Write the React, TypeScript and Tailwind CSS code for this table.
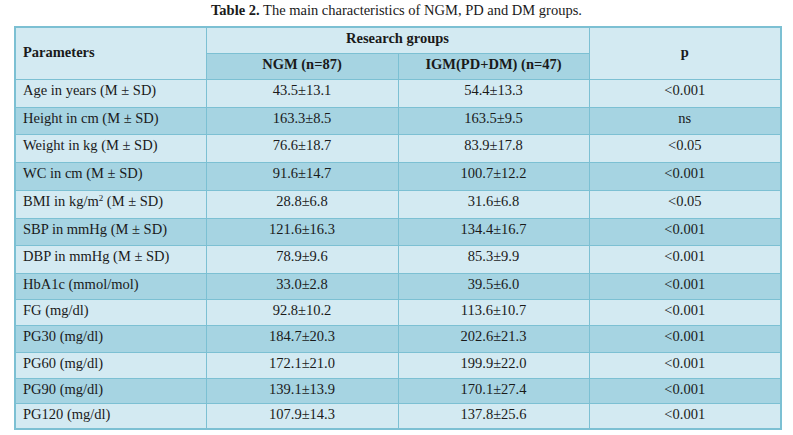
const rows = [
  { label: 'Age in years (M ± SD)', ngm: '43.5±13.1', igm: '54.4±13.3', p: '<0.001', h: 'h-[28px]' },
  { label: 'Height in cm (M ± SD)', ngm: '163.3±8.5', igm: '163.5±9.5', p: 'ns', h: 'h-[27px]' },
  { label: 'Weight in kg (M ± SD)', ngm: '76.6±18.7', igm: '83.9±17.8', p: '<0.05', h: 'h-[28px]' },
  { label: 'WC in cm (M ± SD)', ngm: '91.6±14.7', igm: '100.7±12.2', p: '<0.001', h: 'h-[28px]' },
  { label: 'BMI', ngm: '28.8±6.8', igm: '31.6±6.8', p: '<0.05', h: 'h-[28px]' },
  { label: 'SBP in mmHg (M ± SD)', ngm: '121.6±16.3', igm: '134.4±16.7', p: '<0.001', h: 'h-[27px]' },
  { label: 'DBP in mmHg (M ± SD)', ngm: '78.9±9.6', igm: '85.3±9.9', p: '<0.001', h: 'h-[28px]' },
  { label: 'HbA1c (mmol/mol)', ngm: '33.0±2.8', igm: '39.5±6.0', p: '<0.001', h: 'h-[26px]' },
  { label: 'FG (mg/dl)', ngm: '92.8±10.2', igm: '113.6±10.7', p: '<0.001', h: 'h-[26px]' },
  { label: 'PG30 (mg/dl)', ngm: '184.7±20.3', igm: '202.6±21.3', p: '<0.001', h: 'h-[27px]' },
  { label: 'PG60 (mg/dl)', ngm: '172.1±21.0', igm: '199.9±22.0', p: '<0.001', h: 'h-[26px]' },
  { label: 'PG90 (mg/dl)', ngm: '139.1±13.9', igm: '170.1±27.4', p: '<0.001', h: 'h-[25px]' },
  { label: 'PG120 (mg/dl)', ngm: '107.9±14.3', igm: '137.8±25.6', p: '<0.001', h: 'h-[26px]' },
];

const cell = 'border border-[#7cc0d3] align-top pt-[2px] leading-[16px]';

export default function App() {
  return (
    <div className="w-[793px] h-[435px] bg-white text-[14.5px] text-[#1a1a1a] font-['Liberation_Serif',serif] overflow-hidden">
      {/* caption */}
      <div className="h-[21px] pt-[1px] text-center leading-[18px]">
        <b>Table 2.</b> The main characteristics of NGM, PD and DM groups.
      </div>

      <div className="pl-[14px] pt-[5px]">
        <table className="w-[766px] table-fixed border-collapse border-2 border-[#7cc0d3]">
          <colgroup>
            <col className="w-[191px]" />
            <col className="w-[192px]" />
            <col className="w-[191px]" />
            <col className="w-[192px]" />
          </colgroup>
          <thead>
            <tr className="h-[26px] bg-[#d3eaf2]">
              <th rowSpan={2} className="border border-[#7cc0d3] text-left pl-[7px] align-middle">
                Parameters
              </th>
              <th colSpan={2} className={cell + ' text-center'}>
                Research groups
              </th>
              <th rowSpan={2} className="border border-[#7cc0d3] align-middle text-center">
                p
              </th>
            </tr>
            <tr className="h-[26px] bg-[#a6d4e2]">
              <th className={cell + ' text-center'}>NGM (n=87)</th>
              <th className={cell + ' text-center'}>IGM(PD+DM) (n=47)</th>
            </tr>
          </thead>
          <tbody>
            {rows.map((r, i) => (
              <tr key={r.label} className={`${r.h} ${i % 2 === 0 ? 'bg-[#d3eaf2]' : 'bg-[#a6d4e2]'}`}>
                <td className={cell + ' text-left pl-[7px]'}>
                  {r.label === 'BMI' ? (
                    <>
                      BMI in kg/m<sup className="text-[9px]">2</sup> (M ± SD)
                    </>
                  ) : (
                    r.label
                  )}
                </td>
                <td className={cell + ' text-center'}>{r.ngm}</td>
                <td className={cell + ' text-center'}>{r.igm}</td>
                <td className={cell + ' text-center'}>{r.p}</td>
              </tr>
            ))}
          </tbody>
        </table>
      </div>
    </div>
  );
}
